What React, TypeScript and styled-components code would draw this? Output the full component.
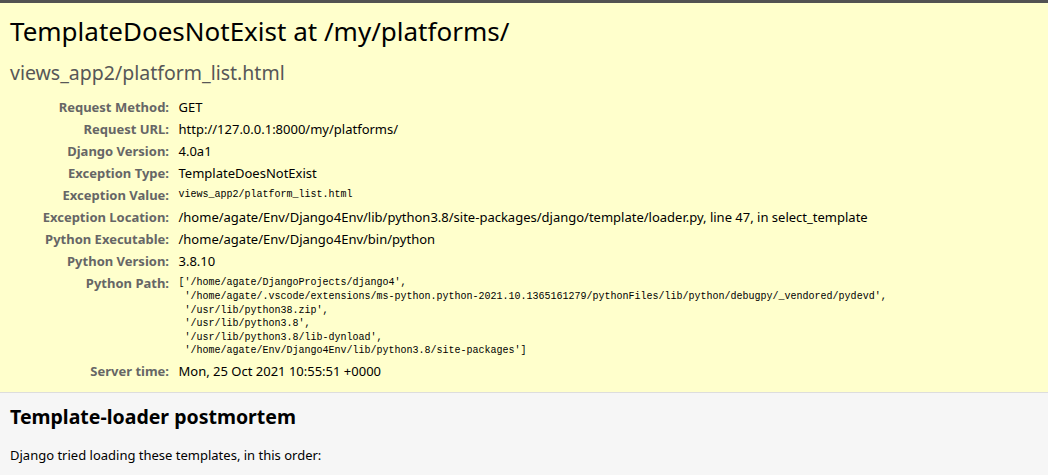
import React from "react"
import styled, { createGlobalStyle } from "styled-components"

const GlobalStyle = createGlobalStyle`
  html, body {
    margin: 0;
    padding: 0;
  }
  body {
    font-family: "Noto Sans", "Open Sans", sans-serif;
    font-size: 13px;
    background: #fff;
    color: #000;
  }
`

const meta: [string, string, boolean?][] = [
  ["Request Method:", "GET"],
  ["Request URL:", "http://127.0.0.1:8000/my/platforms/"],
  ["Django Version:", "4.0a1"],
  ["Exception Type:", "TemplateDoesNotExist"],
  ["Exception Value:", "views_app2/platform_list.html", true],
  ["Exception Location:", "/home/agate/Env/Django4Env/lib/python3.8/site-packages/django/template/loader.py, line 47, in select_template"],
  ["Python Executable:", "/home/agate/Env/Django4Env/bin/python"],
  ["Python Version:", "3.8.10"],
  [
    "Python Path:",
    `['/home/agate/DjangoProjects/django4',
 '/home/agate/.vscode/extensions/ms-python.python-2021.10.1365161279/pythonFiles/lib/python/debugpy/_vendored/pydevd',
 '/usr/lib/python38.zip',
 '/usr/lib/python3.8',
 '/usr/lib/python3.8/lib-dynload',
 '/home/agate/Env/Django4Env/lib/python3.8/site-packages']`,
    true,
  ],
  ["Server time:", "Mon, 25 Oct 2021 10:55:51 +0000"],
]

const App: React.FC = () => (
  <>
    <GlobalStyle />
    <TopBar />
    <Summary>
      <Title>TemplateDoesNotExist at /my/platforms/</Title>
      <ExceptionValue>views_app2/platform_list.html</ExceptionValue>
      <MetaTable>
        <tbody>
          {meta.map(([label, value, mono]) => (
            <tr key={label}>
              <Label>{label}</Label>
              <Value>{mono ? <Code>{value}</Code> : value}</Value>
            </tr>
          ))}
        </tbody>
      </MetaTable>
    </Summary>
    <Postmortem>
      <SectionTitle>Template-loader postmortem</SectionTitle>
      <Paragraph>Django tried loading these templates, in this order:</Paragraph>
    </Postmortem>
  </>
)

const TopBar = styled.div`
  height: 3px;
  background: #525252;
`

const Summary = styled.div`
  background: #ffc;
  padding: 10px 10px;
  border-bottom: 1px solid #ddd;
`

const Title = styled.h1`
  margin: 0;
  font-size: 26px;
  font-weight: normal;
  line-height: normal;
`

const ExceptionValue = styled.pre`
  margin: 10px 0;
  font-family: "Noto Sans", "Open Sans", sans-serif;
  font-size: 19.5px;
  color: #575757;
  white-space: pre-wrap;
`

const MetaTable = styled.table`
  border: none;
  border-collapse: collapse;
  background: transparent;
`

const Label = styled.th`
  width: 156px;
  padding: 2px 6.5px 2px 3px;
  text-align: right;
  vertical-align: top;
  color: #666;
  font-weight: bold;
`

const Value = styled.td`
  padding: 2px 3px;
  vertical-align: top;
`

const Code = styled.pre`
  margin: 0;
  padding-top: 2.4px;
  font-family: "Liberation Mono", "DejaVu Sans Mono", monospace;
  font-size: 10px;
  line-height: 13.6px;
  white-space: pre-wrap;
  word-break: break-word;
`

const Postmortem = styled.div`
  background: #f6f6f6;
  padding: 10px 10px;
  min-height: 80px;
`

const SectionTitle = styled.h2`
  margin: 0 0 0.8em 0;
  font-size: 19.5px;
  font-weight: bold;
`

const Paragraph = styled.p`
  margin: 0 0 10px 0;
`

export default App
